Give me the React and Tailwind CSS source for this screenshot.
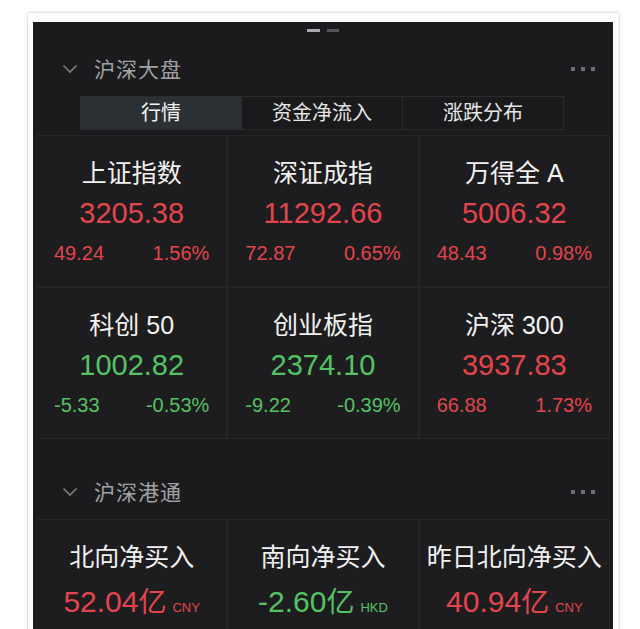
import React from "react";

const FONT = { fontFamily: '"Liberation Sans","Noto Sans CJK SC",sans-serif' };

const RED = "text-[#e2454b]";
const GREEN = "text-[#55c263]";

function Chevron() {
  return (
    <svg width="16" height="10" viewBox="0 0 16 10" className="mr-[16px]">
      <path d="M1.5 1.5 L8 8 L14.5 1.5" fill="none" stroke="#7d7d80" strokeWidth="1.6" />
    </svg>
  );
}

function Dots() {
  return (
    <div className="flex gap-[6px]">
      <span className="w-[4px] h-[4px] bg-[#6e6e72]" />
      <span className="w-[4px] h-[4px] bg-[#6e6e72]" />
      <span className="w-[4px] h-[4px] bg-[#6e6e72]" />
    </div>
  );
}

function SectionHeader({ title }) {
  return (
    <div className="flex items-center h-[34px] pl-[29px] pr-[18px]">
      <Chevron />
      <span className="text-[21px] text-[#a2a2a6] leading-none tracking-[1px]">{title}</span>
      <div className="flex-1" />
      <Dots />
    </div>
  );
}

function IndexCell({ name, value, change, pct, up }) {
  const c = up ? RED : GREEN;
  return (
    <div className="h-[152px] border border-[#262629] bg-[#1d1d1f] flex flex-col items-center pt-[22px]">
      <div className="text-[25px] leading-[30px] text-[#f2f2f2] whitespace-pre">{name}</div>
      <div className={`mt-[10px] text-[29px] leading-[30px] ${c}`}>{value}</div>
      <div className={`mt-[13px] w-full flex justify-between px-[17px] text-[20px] leading-[24px] ${c}`}>
        <span>{change}</span>
        <span>{pct}</span>
      </div>
    </div>
  );
}

function FlowCell({ name, value, unit, up }) {
  const c = up ? RED : GREEN;
  return (
    <div className="h-[120px] border border-[#262629] bg-[#1d1d1f] flex flex-col items-center pt-[22px]">
      <div className="text-[25px] leading-[30px] text-[#f2f2f2] whitespace-nowrap">{name}</div>
      <div className={`mt-[15px] flex items-baseline ${c}`}>
        <span className="text-[30px] leading-[30px]">{value}</span>
        <span className="text-[28px] leading-[30px]">亿</span>
        <span className="ml-[6px] text-[13px] leading-none">{unit}</span>
      </div>
    </div>
  );
}

export default function App() {
  const tabs = ["行情", "资金净流入", "涨跌分布"];
  const row = [
    { name: "上证指数", value: "3205.38", change: "49.24", pct: "1.56%", up: true },
    { name: "深证成指", value: "11292.66", change: "72.87", pct: "0.65%", up: true },
    { name: "万得全 A", value: "5006.32", change: "48.43", pct: "0.98%", up: true },
    { name: "科创 50", value: "1002.82", change: "-5.33", pct: "-0.53%", up: false },
    { name: "创业板指", value: "2374.10", change: "-9.22", pct: "-0.39%", up: false },
    { name: "沪深 300", value: "3937.83", change: "66.88", pct: "1.73%", up: true },
  ];
  return (
    <div className="w-[640px] h-[629px] bg-white overflow-hidden" style={FONT}>
      <div className="ml-[27px] mt-[12px] w-[593px] h-[640px] border border-[#e4e4e4] rounded-[2px] shadow-[0_0_4px_rgba(0,0,0,0.08)] pt-[9px] pl-[5px]">
        <div className="w-[580px] h-[640px] bg-[#1b1b1d]">
          <div className="flex justify-center gap-[7px] pt-[7px]">
            <span className="w-[13px] h-[3px] bg-[#a9a9ad]" />
            <span className="w-[12px] h-[3px] bg-[#56565a]" />
          </div>
          <div className="mt-[20px]">
            <SectionHeader title="沪深大盘" />
          </div>
          <div className="mt-[10px] ml-[47px] w-[484px] h-[34px] flex border border-[#2c2c2f] bg-[#1a1a1c]">
            {tabs.map((t, i) => (
              <div
                key={t}
                className={`flex-1 flex items-center justify-center text-[20px] leading-none ${
                  i === 0 ? "bg-[#2b3034] text-[#f4f4f4]" : "text-[#e6e6e6] border-l border-[#2c2c2f]"
                }`}
              >
                {t}
              </div>
            ))}
          </div>
          <div className="mt-[5px] px-[3px] grid grid-cols-3">
            {row.map((r) => (
              <IndexCell key={r.name} {...r} />
            ))}
          </div>
          <div className="mt-[36px]">
            <SectionHeader title="沪深港通" />
          </div>
          <div className="mt-[10px] px-[3px] grid grid-cols-3">
            <FlowCell name="北向净买入" value="52.04" unit="CNY" up />
            <FlowCell name="南向净买入" value="-2.60" unit="HKD" up={false} />
            <FlowCell name="昨日北向净买入" value="40.94" unit="CNY" up />
          </div>
        </div>
      </div>
    </div>
  );
}
